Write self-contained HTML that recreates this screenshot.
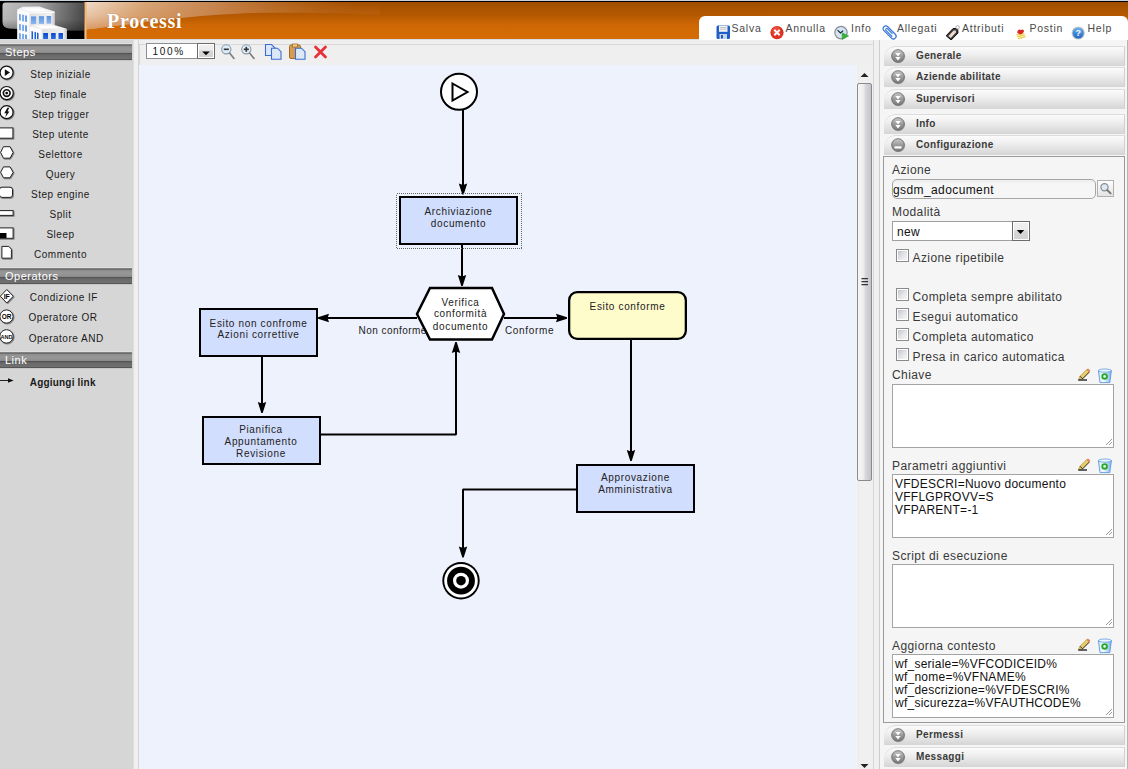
<!DOCTYPE html>
<html><head><meta charset="utf-8">
<style>
*{box-sizing:border-box}
html,body{margin:0;padding:0}
body{width:1128px;height:769px;overflow:hidden;position:relative;background:#f4f4f4;font-family:"Liberation Sans",sans-serif;color:#222}
.a{position:absolute}
.t{position:absolute;white-space:pre;line-height:1}
</style></head><body>
<div class="a" style="left:0;top:0;width:1128px;height:1px;background:#c9d1da"></div>
<div class="a" style="left:0;top:1px;width:1128px;height:1px;background:#000"></div>
<div class="a" style="left:0;top:39px;width:1128px;height:1px;background:#d6dde4"></div>
<svg class="a" style="left:0;top:2px" width="84" height="37" viewBox="0 2 84 37">
<defs>
<linearGradient id="lg1" x1="0" y1="0" x2="1" y2="0"><stop offset="0" stop-color="#c2c2c2"/><stop offset="0.45" stop-color="#a4a4a4"/><stop offset="0.8" stop-color="#6c6c6c"/><stop offset="1" stop-color="#4c4c4c"/></linearGradient><linearGradient id="lg2" x1="0" y1="0" x2="0" y2="1"><stop offset="0" stop-color="#000" stop-opacity="0"/><stop offset="0.6" stop-color="#000" stop-opacity="0.05"/><stop offset="1" stop-color="#000" stop-opacity="0.35"/></linearGradient>
<linearGradient id="win1" x1="0" y1="0" x2="0" y2="1"><stop offset="0" stop-color="#5c92e0"/><stop offset="1" stop-color="#8cb8f0"/></linearGradient>
<linearGradient id="win2" x1="0" y1="0" x2="0" y2="1"><stop offset="0" stop-color="#0848d0"/><stop offset="1" stop-color="#2a6ae0"/></linearGradient>
<linearGradient id="face" x1="0" y1="0" x2="1" y2="0"><stop offset="0" stop-color="#e0e0e0"/><stop offset="0.85" stop-color="#f0f0f0"/><stop offset="1" stop-color="#c8c8c8"/></linearGradient>
</defs>
<rect x="0" y="2" width="84" height="37" fill="#000"/>
<path d="M5.5,2.5 L84,2.5 L84,30.5 Q40,30.5 10,28.5 Q2.5,28 2.5,22 L2.5,5.5 Q2.5,2.5 5.5,2.5Z" fill="url(#lg1)"/><path d="M5.5,2.5 L84,2.5 L84,30.5 Q40,30.5 10,28.5 Q2.5,28 2.5,22 L2.5,5.5 Q2.5,2.5 5.5,2.5Z" fill="url(#lg2)"/>
<path d="M17.4,9.6 L22.5,6.8 L39,6.6 L54.5,11.5 L54.5,39 L17.4,39Z" fill="#f2f2f2"/>
<path d="M29.3,12.5 L54.5,11.8 L54.5,39 L29.3,39Z" fill="url(#face)"/><path d="M29.3,13 L54.5,12.3" stroke="#fff" stroke-width="1"/>
<path d="M22,8.5 L38,8.2 L48,11 L30,11.5Z" fill="#fff"/>
<path d="M17.4,9.6 L29.3,12.5 L29.3,39 L17.4,39Z" fill="#fbfbfb"/>
<g fill="#6a9ee6"><path d="M19.1,13.9 L20.8,14.3 L20.8,20.7 L19.1,20.3Z"/><path d="M22.2,14.6 L23.9,15 L23.9,21.4 L22.2,21Z"/><path d="M25,15.3 L27,15.7 L27,22.1 L25,21.7Z"/>
<path d="M19.1,23.8 L20.8,24.2 L20.8,30.4 L19.1,30Z"/><path d="M22.2,24.5 L23.9,24.9 L23.9,31.1 L22.2,30.7Z"/><path d="M25,25.2 L27,25.6 L27,31.8 L25,31.4Z"/>
<path d="M19.1,33 L20.8,33.4 L20.8,39 L19.1,39Z"/><path d="M22.2,33.7 L23.9,34.1 L23.9,39 L22.2,39Z"/><path d="M25,34.4 L27,34.8 L27,39 L25,39Z"/></g>
<rect x="31" y="16.4" width="5.1" height="7.7" fill="url(#win1)"/><rect x="38.9" y="16.2" width="5.1" height="7.7" fill="url(#win1)"/><rect x="46.6" y="16" width="4.5" height="7.7" fill="url(#win1)"/>
<path d="M29.9,27 L35,24.4 L52,24.2 L66.7,28.8 L66.7,39 L29.9,39Z" fill="#f0f0f0"/>
<path d="M41.5,29.3 L66.7,29 L66.7,39 L41.5,39Z" fill="url(#face)"/>
<path d="M35,25.8 L51,25.6 L60,28 L42,28.4Z" fill="#fff"/>
<path d="M29.9,27 L41.5,29.3 L41.5,39 L29.9,39Z" fill="#fcfcfc"/>
<g fill="#1a5cd8"><path d="M31.5,31 L33,31.4 L33,39 L31.5,39Z"/><path d="M34.5,31.8 L36,32.2 L36,39 L34.5,39Z"/><path d="M37,32.5 L38.5,32.9 L38.5,39 L37,39Z"/></g>
<rect x="43.2" y="33" width="4.8" height="6" fill="url(#win2)"/><rect x="51.1" y="33" width="4.6" height="6" fill="url(#win2)"/><rect x="58.5" y="33" width="4.5" height="6" fill="url(#win2)"/>
</svg>
<svg class="a" style="left:84px;top:2px" width="1044" height="37" viewBox="84 2 1044 37">
<defs>
<linearGradient id="og" x1="0" y1="0" x2="0" y2="1"><stop offset="0" stop-color="#a04e00"/><stop offset="0.35" stop-color="#b45800"/><stop offset="0.6" stop-color="#cc6604"/><stop offset="0.8" stop-color="#d36b05"/><stop offset="1" stop-color="#d46b05"/></linearGradient>
<linearGradient id="gl" gradientUnits="userSpaceOnUse" x1="86" y1="0" x2="365" y2="0"><stop offset="0" stop-color="#f0dcc8" stop-opacity="1"/><stop offset="0.2" stop-color="#dcac80" stop-opacity="0.95"/><stop offset="0.45" stop-color="#cc9060" stop-opacity="0.85"/><stop offset="0.75" stop-color="#c07838" stop-opacity="0.45"/><stop offset="1" stop-color="#b06020" stop-opacity="0"/></linearGradient>
<linearGradient id="gl2" gradientUnits="userSpaceOnUse" x1="0" y1="2" x2="0" y2="30"><stop offset="0" stop-color="#c87838" stop-opacity="0"/><stop offset="0.45" stop-color="#c87838" stop-opacity="0.2"/><stop offset="1" stop-color="#c86a20" stop-opacity="0.6"/></linearGradient>
</defs>
<rect x="84" y="2" width="1044" height="37" fill="url(#og)"/>
<path d="M86,2 L380,2 L380,14.5 C340,13.5 310,12.6 270,12.8 C200,13.5 150,22 86,29.5Z" fill="url(#gl)"/>
<path d="M86,2 L380,2 L380,14.5 C340,13.5 310,12.6 270,12.8 C200,13.5 150,22 86,29.5Z" fill="url(#gl2)"/>
<rect x="84" y="2" width="1" height="37" fill="#c86a10"/>
<rect x="85" y="2" width="1" height="37" fill="#c8c4c0"/>
<rect x="86" y="2" width="1" height="37" fill="#f0b070" opacity="0.6"/>
</svg>
<div class="t" style="left:107px;top:11.3px;font-family:'Liberation Serif',serif;font-weight:bold;font-size:20px;letter-spacing:0.7px;color:#fff;text-shadow:0 0 1px rgba(120,60,0,0.5)">Processi</div>
<div class="a" style="left:699px;top:16px;width:429px;height:24px;background:#fff;border-radius:6px 6px 0 0"></div>
<svg class="a" style="left:716px;top:25px" width="16" height="15" viewBox="0 0 16 15"><rect x="0.5" y="0.5" width="13.5" height="13.5" rx="1.5" fill="#1f5fc8"/><rect x="3" y="0.8" width="8.5" height="6" fill="#f4f4f4"/><path d="M4,2.5 H10.5 M4,4.2 H10.5" stroke="#b8b8b8" stroke-width="0.8"/><rect x="3.5" y="9" width="7.5" height="5" fill="#c8d4e8"/><rect x="5" y="10" width="2" height="3.5" fill="#1f5fc8"/></svg>
<div class="t" style="left:731.5px;top:23px;font-size:10.5px;letter-spacing:0.75px;color:#4a4a4a">Salva</div>
<svg class="a" style="left:770px;top:25px" width="16" height="15" viewBox="0 0 16 15"><circle cx="7" cy="7.6" r="6.6" fill="#e03020"/><circle cx="6.3" cy="6" r="4" fill="#f06050" opacity="0.6"/><path d="M4.3,4.9 L9.7,10.3 M9.7,4.9 L4.3,10.3" stroke="#fff" stroke-width="2"/></svg>
<div class="t" style="left:785.5px;top:23px;font-size:10.5px;letter-spacing:0.75px;color:#4a4a4a">Annulla</div>
<svg class="a" style="left:834px;top:25px" width="16" height="15" viewBox="0 0 16 15"><circle cx="7" cy="7.6" r="6.2" fill="#d2e6f6" stroke="#8c8c96" stroke-width="1.2"/><path d="M3.6,5.2 L6.4,8 L9.2,5.6" fill="none" stroke="#222" stroke-width="1.1"/><path d="M8.2,7.8 L14.6,11 L8.2,14.4Z" fill="#3cb43c" stroke="#2a9a2a" stroke-width="0.6"/></svg>
<div class="t" style="left:851px;top:23px;font-size:10.5px;letter-spacing:0.75px;color:#4a4a4a">Info</div>
<svg class="a" style="left:882px;top:25px" width="16" height="15" viewBox="0 0 16 15"><g transform="rotate(-45 7.5 7.5)"><rect x="4.9" y="-0.5" width="5.4" height="16" rx="2.7" fill="none" stroke="#3a78d8" stroke-width="1.3"/><path d="M6.5,12.5 V3.2 Q7.6,1.6 8.7,3.2 V10.5" fill="none" stroke="#3a78d8" stroke-width="1.1"/></g></svg>
<div class="t" style="left:897px;top:23px;font-size:10.5px;letter-spacing:0.75px;color:#4a4a4a">Allegati</div>
<svg class="a" style="left:945px;top:25px" width="16" height="15" viewBox="0 0 16 15"><path d="M1.2,10.8 L8,3.6 L12.6,3.4 L13,8 L6.2,15 Z" fill="#3a3a3a" stroke="#111" stroke-width="1" stroke-linejoin="round"/><path d="M3.4,10.9 L8.6,5.4 L10.8,5.4 L11,7.6 L5.8,13Z" fill="#f2dccc"/><circle cx="12.6" cy="2.4" r="1.7" fill="#fff" stroke="#999" stroke-width="0.8"/></svg>
<div class="t" style="left:962px;top:23px;font-size:10.5px;letter-spacing:0.75px;color:#4a4a4a">Attributi</div>
<svg class="a" style="left:1014px;top:25px" width="16" height="15" viewBox="0 0 16 15"><path d="M2,9 L9.5,7 L12,12.5 L4.5,14.5Z" fill="#fbf0a0"/><path d="M2.5,10 L10,8 M3.2,11.8 L10.8,9.8 M4,13.6 L11.5,11.6" stroke="#e0c040" stroke-width="0.8"/><path d="M3,7.5 Q4,3.5 7,5 Q10,3.5 10,6.5 Q8.5,9 6,9.5Z" fill="#d82828"/></svg>
<div class="t" style="left:1029.5px;top:23px;font-size:10.5px;letter-spacing:0.75px;color:#4a4a4a">Postin</div>
<svg class="a" style="left:1071px;top:25px" width="16" height="15" viewBox="0 0 16 15"><defs><linearGradient id="hg" x1="0" y1="0" x2="0" y2="1"><stop offset="0" stop-color="#6ab0f0"/><stop offset="1" stop-color="#1e64c0"/></linearGradient></defs><circle cx="7.2" cy="8" r="6.6" fill="#c8c8c8"/><circle cx="7.2" cy="8" r="5.6" fill="url(#hg)"/><text x="7.2" y="11.4" text-anchor="middle" font-family="Liberation Sans" font-weight="bold" font-size="9" fill="#fff">?</text></svg>
<div class="t" style="left:1087.5px;top:23px;font-size:10.5px;letter-spacing:0.75px;color:#4a4a4a">Help</div>
<div id="left" class="a" style="left:0;top:40px;width:133px;height:729px;background:#d6d6d6"></div>
<div class="a" style="left:133px;top:40px;width:5px;height:729px;background:linear-gradient(90deg,#d2d2d2 0,#ececec 1px,#f0f0f0 2px,#f0f0f0 100%)"></div>
<div class="a" style="left:138px;top:40px;width:1px;height:729px;background:#d4d4d4"></div>
<div class="a" style="left:0;top:43px;width:132px;height:18px;background:linear-gradient(180deg,#dfdfdf 0px,#dfdfdf 1px,#828282 1px,#828282 2px,#6e6e6e 2px,#6e6e6e 3px,#8e8e8e 3px,#8e8e8e 4px,#939393 4px,#939393 5px,#969696 5px,#969696 6px,#969696 6px,#969696 7px,#949494 7px,#949494 8px,#919191 8px,#919191 9px,#8c8c8c 9px,#8c8c8c 10px,#545454 10px,#545454 11px,#646464 11px,#646464 12px,#6a6a6a 12px,#6a6a6a 13px,#6c6c6c 13px,#6c6c6c 14px,#6e6e6e 14px,#6e6e6e 15px,#707070 15px,#707070 16px,#555555 16px,#555555 17px,#c6c6c6 17px,#c6c6c6 18px)"></div>
<div class="t" style="left:5px;top:47px;font-size:11px;letter-spacing:0.5px;color:#fff">Steps</div>
<div class="a" style="left:0;top:267px;width:132px;height:18px;background:linear-gradient(180deg,#dfdfdf 0px,#dfdfdf 1px,#828282 1px,#828282 2px,#6e6e6e 2px,#6e6e6e 3px,#8e8e8e 3px,#8e8e8e 4px,#939393 4px,#939393 5px,#969696 5px,#969696 6px,#969696 6px,#969696 7px,#949494 7px,#949494 8px,#919191 8px,#919191 9px,#8c8c8c 9px,#8c8c8c 10px,#545454 10px,#545454 11px,#646464 11px,#646464 12px,#6a6a6a 12px,#6a6a6a 13px,#6c6c6c 13px,#6c6c6c 14px,#6e6e6e 14px,#6e6e6e 15px,#707070 15px,#707070 16px,#555555 16px,#555555 17px,#c6c6c6 17px,#c6c6c6 18px)"></div>
<div class="t" style="left:5px;top:271px;font-size:11px;letter-spacing:0.5px;color:#fff">Operators</div>
<div class="a" style="left:0;top:351px;width:132px;height:18px;background:linear-gradient(180deg,#dfdfdf 0px,#dfdfdf 1px,#828282 1px,#828282 2px,#6e6e6e 2px,#6e6e6e 3px,#8e8e8e 3px,#8e8e8e 4px,#939393 4px,#939393 5px,#969696 5px,#969696 6px,#969696 6px,#969696 7px,#949494 7px,#949494 8px,#919191 8px,#919191 9px,#8c8c8c 9px,#8c8c8c 10px,#545454 10px,#545454 11px,#646464 11px,#646464 12px,#6a6a6a 12px,#6a6a6a 13px,#6c6c6c 13px,#6c6c6c 14px,#6e6e6e 14px,#6e6e6e 15px,#707070 15px,#707070 16px,#555555 16px,#555555 17px,#c6c6c6 17px,#c6c6c6 18px)"></div>
<div class="t" style="left:5px;top:355px;font-size:11px;letter-spacing:0.5px;color:#fff">Link</div>
<div class="t" style="left:0.5px;top:69.7px;width:120px;text-align:center;font-size:10px;letter-spacing:0.5px;color:#1a1a1a;">Step iniziale</div>
<div class="t" style="left:0.5px;top:89.7px;width:120px;text-align:center;font-size:10px;letter-spacing:0.5px;color:#1a1a1a;">Step finale</div>
<div class="t" style="left:0.5px;top:109.7px;width:120px;text-align:center;font-size:10px;letter-spacing:0.5px;color:#1a1a1a;">Step trigger</div>
<div class="t" style="left:0.5px;top:129.7px;width:120px;text-align:center;font-size:10px;letter-spacing:0.5px;color:#1a1a1a;">Step utente</div>
<div class="t" style="left:0.5px;top:149.7px;width:120px;text-align:center;font-size:10px;letter-spacing:0.5px;color:#1a1a1a;">Selettore</div>
<div class="t" style="left:0.5px;top:169.7px;width:120px;text-align:center;font-size:10px;letter-spacing:0.5px;color:#1a1a1a;">Query</div>
<div class="t" style="left:0.5px;top:189.7px;width:120px;text-align:center;font-size:10px;letter-spacing:0.5px;color:#1a1a1a;">Step engine</div>
<div class="t" style="left:0.5px;top:209.7px;width:120px;text-align:center;font-size:10px;letter-spacing:0.5px;color:#1a1a1a;">Split</div>
<div class="t" style="left:0.5px;top:229.7px;width:120px;text-align:center;font-size:10px;letter-spacing:0.5px;color:#1a1a1a;">Sleep</div>
<div class="t" style="left:0.5px;top:249.7px;width:120px;text-align:center;font-size:10px;letter-spacing:0.5px;color:#1a1a1a;">Commento</div>
<div class="t" style="left:3.8999999999999986px;top:293px;width:120px;text-align:center;font-size:10px;letter-spacing:0.5px;color:#1a1a1a;">Condizione IF</div>
<div class="t" style="left:3px;top:313.3px;width:120px;text-align:center;font-size:10px;letter-spacing:0.5px;color:#1a1a1a;">Operatore OR</div>
<div class="t" style="left:6.200000000000003px;top:333.8px;width:120px;text-align:center;font-size:10px;letter-spacing:0.5px;color:#1a1a1a;">Operatore AND</div>
<div class="t" style="left:2.700000000000003px;top:377.8px;width:120px;text-align:center;font-size:10px;letter-spacing:0.5px;color:#1a1a1a;font-weight:bold;letter-spacing:0.2px;">Aggiungi link</div>
<svg class="a" style="left:0;top:0" width="30" height="400"><defs><filter id="sh" x="-30%" y="-30%" width="160%" height="160%"><feDropShadow dx="0.8" dy="0.8" stdDeviation="0.6" flood-color="#000" flood-opacity="0.45"/></filter></defs><g filter="url(#sh)"><circle cx="6.6" cy="72.6" r="6.5" fill="#fff" stroke="#111" stroke-width="1.2"/></g><path d="M4.8,69.3 L10,72.6 L4.8,75.9Z" fill="#111"/><g filter="url(#sh)"><circle cx="6.7" cy="93.1" r="6.6" fill="#fff" stroke="#111" stroke-width="1.2"/></g><circle cx="6.7" cy="93.1" r="3.35" fill="none" stroke="#111" stroke-width="1.7"/><circle cx="6.7" cy="93.1" r="1.4" fill="#111"/><g filter="url(#sh)"><circle cx="6.6" cy="112.2" r="6.5" fill="#fff" stroke="#111" stroke-width="1.2"/></g><path d="M7.4,107.8 L9.2,107.8 L7.6,111.4 L9.4,111.4 L5.2,117.4 L6.4,113.2 L4.3,113.2Z" fill="#111"/><g filter="url(#sh)"><rect x="-0.5" y="127.9" width="13.4" height="10.3" fill="#fff" stroke="#222" stroke-width="1"/></g><g filter="url(#sh)"><path d="M3.5,146.7 L10,146.7 L13.2,152.4 L10,158.2 L3.5,158.2 L0.6,152.4Z" fill="#fff" stroke="#222" stroke-width="1"/></g><g filter="url(#sh)"><path d="M3.5,166.9 L10,166.9 L13.2,172.3 L10,177.8 L3.5,177.8 L0.6,172.3Z" fill="#fff" stroke="#222" stroke-width="1"/></g><g filter="url(#sh)"><rect x="-0.5" y="187.2" width="13" height="10.2" rx="2.5" fill="#fff" stroke="#222" stroke-width="1"/></g><g filter="url(#sh)"><rect x="-0.5" y="210.6" width="13.6" height="4.8" fill="#fff" stroke="#222" stroke-width="1"/></g><g filter="url(#sh)"><rect x="-0.5" y="227.9" width="13.6" height="10.4" fill="#fff" stroke="#222" stroke-width="1"/></g><rect x="0" y="233" width="6.5" height="5" fill="#000"/><g filter="url(#sh)"><path d="M1.9,246.4 L8.8,246.4 L11.4,249.2 L11.4,258.2 L1.9,258.2Z" fill="#fff" stroke="#222" stroke-width="1"/></g><g filter="url(#sh)"><path d="M6.8,289.5 L13.3,296.2 L6.8,303 L0.3,296.2Z" fill="#fff" stroke="#222" stroke-width="1"/></g><text x="6.8" y="298.8" text-anchor="middle" font-family="Liberation Sans" font-weight="bold" font-size="7" fill="#000">IF</text><g filter="url(#sh)"><circle cx="6.5" cy="316.5" r="6.6" fill="#fff" stroke="#222" stroke-width="1"/></g><text x="6.5" y="318.8" text-anchor="middle" font-family="Liberation Sans" font-weight="bold" font-size="6.5" fill="#000">OR</text><g filter="url(#sh)"><circle cx="6.5" cy="336.4" r="6.7" fill="#fff" stroke="#222" stroke-width="1"/></g><text x="6.6" y="338.6" text-anchor="middle" font-family="Liberation Sans" font-weight="bold" font-size="5.2" fill="#111" textLength="12" lengthAdjust="spacingAndGlyphs">AND</text><path d="M0,380.5 H9" stroke="#222" stroke-width="1"/><path d="M13.6,380.5 L8,378.3 L8,382.7Z" fill="#111"/></svg>
<div id="ctool" class="a" style="left:139px;top:40px;width:735px;height:25px;background:#efefef"></div>
<div class="a" style="left:139px;top:44px;width:735px;height:1px;background:#d8d8d8"></div>
<div class="a" style="left:139px;top:44px;width:1px;height:21px;background:#d8d8d8"></div>
<div id="canvas" class="a" style="left:139px;top:65px;width:717px;height:704px;background:#eef2fd"></div>
<svg class="a" style="left:0;top:0" width="1128" height="769" viewBox="0 0 1128 769"><path d="M463,110 V186" stroke="#000" fill="none" stroke-width="2" stroke-linejoin="bevel"/><path d="M462.30,194.50 L458.80,183.50 L463.00,184.90 L467.20,183.50 L463.70,194.50 Z" fill="#000"/>
<path d="M462,245 V278" stroke="#000" fill="none" stroke-width="2" stroke-linejoin="bevel"/><path d="M461.30,286.00 L457.80,275.00 L462.00,276.40 L466.20,275.00 L462.70,286.00 Z" fill="#000"/>
<path d="M417,318 H326" stroke="#000" fill="none" stroke-width="2" stroke-linejoin="bevel"/><path d="M318.00,317.30 L329.00,313.80 L327.60,318.00 L329.00,322.20 L318.00,318.70 Z" fill="#000"/>
<path d="M504,318 H559" stroke="#000" fill="none" stroke-width="2" stroke-linejoin="bevel"/><path d="M567.00,317.30 L556.00,313.80 L557.40,318.00 L556.00,322.20 L567.00,318.70 Z" fill="#000"/>
<path d="M262,357 V405" stroke="#000" fill="none" stroke-width="2" stroke-linejoin="bevel"/><path d="M261.30,413.00 L257.80,402.00 L262.00,403.40 L266.20,402.00 L262.70,413.00 Z" fill="#000"/>
<path d="M321,434.5 H456 V350" stroke="#000" fill="none" stroke-width="2" stroke-linejoin="bevel"/><path d="M455.30,342.00 L451.80,353.00 L456.00,351.60 L460.20,353.00 L456.70,342.00 Z" fill="#000"/>
<path d="M631,340 V453" stroke="#000" fill="none" stroke-width="2" stroke-linejoin="bevel"/><path d="M630.30,461.00 L626.80,450.00 L631.00,451.40 L635.20,450.00 L631.70,461.00 Z" fill="#000"/>
<path d="M576,489.5 H463 V549" stroke="#000" fill="none" stroke-width="2" stroke-linejoin="bevel"/><path d="M462.30,557.50 L458.80,546.50 L463.00,547.90 L467.20,546.50 L463.70,557.50 Z" fill="#000"/>
<text x="358.6" y="333.8" font-family="Liberation Sans" font-size="10" fill="#222" letter-spacing="0.45">Non conforme</text>
<text x="505" y="333.8" font-family="Liberation Sans" font-size="10" fill="#222" letter-spacing="0.65">Conforme</text>
<circle cx="459" cy="91.8" r="18" fill="#fff" stroke="#000" stroke-width="2"/>
<path d="M452.5,83.5 L467.5,92 L452.5,100.5 Z" fill="none" stroke="#000" stroke-width="2" stroke-linejoin="miter"/>
<rect x="396.5" y="193.5" width="125" height="55" fill="none" stroke="#666" stroke-width="1" stroke-dasharray="1,1" shape-rendering="crispEdges"/>
<rect x="400" y="197" width="117" height="47" fill="#d2defd" stroke="#000" stroke-width="2"/><text x="458.5" y="214.7" text-anchor="middle" font-family="Liberation Sans" font-size="10" fill="#222" letter-spacing="0.65">Archiviazione</text><text x="458.5" y="226.5" text-anchor="middle" font-family="Liberation Sans" font-size="10" fill="#222" letter-spacing="0.65">documento</text>
<path d="M430,288 L492,288 L504,314 L492,339.5 L430,339.5 L417,314 Z" fill="#fff" stroke="#000" stroke-width="2.5"/>
<text x="460.5" y="305.5" text-anchor="middle" font-family="Liberation Sans" font-size="10" fill="#222" letter-spacing="0.65">Verifica</text><text x="460.5" y="317.3" text-anchor="middle" font-family="Liberation Sans" font-size="10" fill="#222" letter-spacing="0.65">conformità</text><text x="460.5" y="329.5" text-anchor="middle" font-family="Liberation Sans" font-size="10" fill="#222" letter-spacing="0.65">documento</text>
<rect x="200" y="309" width="117" height="47" fill="#d2defd" stroke="#000" stroke-width="2"/><text x="258.5" y="326.6" text-anchor="middle" font-family="Liberation Sans" font-size="10" fill="#222" letter-spacing="0.65">Esito non confrome</text><text x="258.5" y="338.4" text-anchor="middle" font-family="Liberation Sans" font-size="10" fill="#222" letter-spacing="0.65">Azioni correttive</text>
<rect x="569.15" y="292.15" width="116.7" height="46.7" rx="8" fill="#fffccc" stroke="#000" stroke-width="2.3"/><text x="627.5" y="309.8" text-anchor="middle" font-family="Liberation Sans" font-size="10" fill="#222" letter-spacing="0.65">Esito conforme</text>
<rect x="203" y="417" width="117" height="47" fill="#d2defd" stroke="#000" stroke-width="2"/><text x="261" y="432.6" text-anchor="middle" font-family="Liberation Sans" font-size="10" fill="#222" letter-spacing="0.65">Pianifica</text><text x="261" y="444.7" text-anchor="middle" font-family="Liberation Sans" font-size="10" fill="#222" letter-spacing="0.65">Appuntamento</text><text x="261" y="456.8" text-anchor="middle" font-family="Liberation Sans" font-size="10" fill="#222" letter-spacing="0.65">Revisione</text>
<rect x="577" y="465" width="117" height="47" fill="#d2defd" stroke="#000" stroke-width="2"/><text x="635.5" y="481" text-anchor="middle" font-family="Liberation Sans" font-size="10" fill="#222" letter-spacing="0.65">Approvazione</text><text x="635.5" y="493" text-anchor="middle" font-family="Liberation Sans" font-size="10" fill="#222" letter-spacing="0.65">Amministrativa</text>
<circle cx="461" cy="580.7" r="18.7" fill="#000"/><circle cx="461" cy="580.7" r="16.8" fill="#fff"/><circle cx="461" cy="580.7" r="13.9" fill="#000"/><circle cx="461" cy="580.7" r="8" fill="#fff"/><circle cx="461" cy="580.7" r="4.8" fill="#000"/></svg>
<div class="a" style="left:146px;top:43px;width:69px;height:16px;border:1px solid #8e8e96;background:#fff"></div>
<div class="t" style="left:152.5px;top:46.5px;font-size:10px;letter-spacing:1.7px;color:#111">100%</div>
<div class="a" style="left:197px;top:43px;width:18px;height:16px;border:1px solid #6c6c6c;background:#fff"></div>
<div class="a" style="left:199px;top:45px;width:14px;height:12px;background:linear-gradient(180deg,#f0f0f0 0,#ececec 5px,#d6d6d6 6px,#d2d2d2 100%)"></div>
<svg class="a" style="left:199px;top:47px" width="14" height="10"><path d="M3.2,4.5 L10.8,4.5 L7,8.3Z" fill="#000"/></svg>
<svg class="a" style="left:221px;top:44px" width="16" height="17"><circle cx="5.3" cy="5.3" r="4.6" fill="#dcecf8" stroke="#8c9aa8" stroke-width="1.1"/><path d="M2.8,5.3 H7.8" stroke="#333" stroke-width="1.6"/><path d="M8.6,9 L13,14.5" stroke="#7a7a7a" stroke-width="1.6" stroke-linecap="round"/></svg>
<svg class="a" style="left:241px;top:44px" width="16" height="17"><circle cx="5.3" cy="5.3" r="4.6" fill="#dcecf8" stroke="#8c9aa8" stroke-width="1.1"/><path d="M2.8,5.3 H7.8" stroke="#333" stroke-width="1.6"/><path d="M5.3,2.8 V7.8" stroke="#333" stroke-width="1.6"/><path d="M8.6,9 L13,14.5" stroke="#7a7a7a" stroke-width="1.6" stroke-linecap="round"/></svg>
<svg class="a" style="left:264px;top:43px" width="20" height="18"><path d="M1.5,1.5 H7.5 L11.0,5.0 V12.5 H1.5Z" fill="#dce8f8" stroke="#3a6ed0" stroke-width="1.1"/><path d="M7.5,5.2 H13.5 L17.0,8.7 V16.2 H7.5Z" fill="#dce8f8" stroke="#3a6ed0" stroke-width="1.1"/></svg>
<svg class="a" style="left:288px;top:43px" width="20" height="18"><rect x="1.5" y="2" width="11" height="13.5" rx="1.5" fill="#d89a50" stroke="#a06a28" stroke-width="1"/><rect x="4.5" y="1" width="5" height="3" fill="#f0d090" stroke="#a06a28" stroke-width="0.8"/><path d="M7.5,5.2 H13.5 L17.0,8.7 V16.2 H7.5Z" fill="#dce8f8" stroke="#3a6ed0" stroke-width="1.1"/></svg>
<svg class="a" style="left:312px;top:43px" width="17" height="17"><path d="M3.5,4 L13.5,14 M13.5,4 L3.5,14" stroke="#e8303a" stroke-width="2.8" stroke-linecap="round"/></svg>
<div class="a" style="left:856px;top:65px;width:17px;height:704px;background:linear-gradient(90deg,#f6f6f6 0,#ececec 2px,#f0f0f0 4px,#f0f0f0 100%)"></div>
<svg class="a" style="left:856px;top:68px" width="17" height="12"><path d="M4.5,9 L12.5,9 L8.5,5Z" fill="#222"/></svg>
<div class="a" style="left:857px;top:83px;width:15px;height:398px;border:1px solid #8a8a8a;border-radius:2px;background:linear-gradient(90deg,#f6f6f6 0,#eeeeee 40%,#d6d6da 60%,#c4c4cc 100%)"></div>
<svg class="a" style="left:858px;top:276px" width="13" height="11"><path d="M3.5,2.7 H10 M3.5,5.7 H10 M3.5,8.7 H10" stroke="#333" stroke-width="1.2"/></svg>
<svg class="a" style="left:856px;top:761px" width="17" height="8"><path d="M4.5,3 L12.5,3 L8.5,7Z" fill="#222"/></svg>
<div id="right" class="a" style="left:874px;top:40px;width:254px;height:729px;background:#f0f0f0"></div>
<div class="a" style="left:873px;top:40px;width:1px;height:729px;background:#d6d6d6"></div>
<div class="a" style="left:879px;top:40px;width:1px;height:729px;background:#cdcdcd"></div>
<div class="a" style="left:880px;top:40px;width:248px;height:729px;background:#f5f5f5"></div>
<div class="a" style="left:1127px;top:40px;width:1px;height:729px;background:#b4b4b4"></div>
<div class="a" style="left:884px;top:46px;width:241px;height:20px;border-top:1px solid #dcdcdc;border-right:1px solid #d0d0d0;border-radius:12px 0 0 0;background:linear-gradient(180deg,#fbfbfb 0%,#f0f0f0 35%,#d5d5d5 100%)"></div>
<svg class="a" style="left:889.1px;top:46.6px" width="18" height="18" viewBox="-9 -9 18 18"><defs><linearGradient id="g46" x1="0" y1="0" x2="0" y2="1"><stop offset="0" stop-color="#cacaca"/><stop offset="0.55" stop-color="#969696"/><stop offset="1" stop-color="#7a7a7a"/></linearGradient></defs><circle cx="0.6" cy="0.6" r="6.6" fill="#000" opacity="0.18"/><circle cx="0" cy="0" r="6.3" fill="url(#g46)" stroke="#6a6a6a" stroke-width="0.9"/><path d="M-2.7,-2.9 L2.7,-2.9 L0,0.4Z M-2.7,1.1 L2.7,1.1 L0,4.5Z" fill="#fff"/></svg>
<div class="t" style="left:916px;top:51.4px;font-size:10px;font-weight:bold;letter-spacing:0.35px;color:#3a3a3a">Generale</div>
<div class="a" style="left:884px;top:67px;width:241px;height:20px;border-top:1px solid #dcdcdc;border-right:1px solid #d0d0d0;border-radius:12px 0 0 0;background:linear-gradient(180deg,#fbfbfb 0%,#f0f0f0 35%,#d5d5d5 100%)"></div>
<svg class="a" style="left:889.1px;top:67.6px" width="18" height="18" viewBox="-9 -9 18 18"><defs><linearGradient id="g67" x1="0" y1="0" x2="0" y2="1"><stop offset="0" stop-color="#cacaca"/><stop offset="0.55" stop-color="#969696"/><stop offset="1" stop-color="#7a7a7a"/></linearGradient></defs><circle cx="0.6" cy="0.6" r="6.6" fill="#000" opacity="0.18"/><circle cx="0" cy="0" r="6.3" fill="url(#g67)" stroke="#6a6a6a" stroke-width="0.9"/><path d="M-2.7,-2.9 L2.7,-2.9 L0,0.4Z M-2.7,1.1 L2.7,1.1 L0,4.5Z" fill="#fff"/></svg>
<div class="t" style="left:916px;top:72.4px;font-size:10px;font-weight:bold;letter-spacing:0.35px;color:#3a3a3a">Aziende abilitate</div>
<div class="a" style="left:884px;top:89px;width:241px;height:20px;border-top:1px solid #dcdcdc;border-right:1px solid #d0d0d0;border-radius:12px 0 0 0;background:linear-gradient(180deg,#fbfbfb 0%,#f0f0f0 35%,#d5d5d5 100%)"></div>
<svg class="a" style="left:889.1px;top:89.6px" width="18" height="18" viewBox="-9 -9 18 18"><defs><linearGradient id="g89" x1="0" y1="0" x2="0" y2="1"><stop offset="0" stop-color="#cacaca"/><stop offset="0.55" stop-color="#969696"/><stop offset="1" stop-color="#7a7a7a"/></linearGradient></defs><circle cx="0.6" cy="0.6" r="6.6" fill="#000" opacity="0.18"/><circle cx="0" cy="0" r="6.3" fill="url(#g89)" stroke="#6a6a6a" stroke-width="0.9"/><path d="M-2.7,-2.9 L2.7,-2.9 L0,0.4Z M-2.7,1.1 L2.7,1.1 L0,4.5Z" fill="#fff"/></svg>
<div class="t" style="left:916px;top:94.4px;font-size:10px;font-weight:bold;letter-spacing:0.35px;color:#3a3a3a">Supervisori</div>
<div class="a" style="left:884px;top:114px;width:241px;height:20px;border-top:1px solid #dcdcdc;border-right:1px solid #d0d0d0;border-radius:12px 0 0 0;background:linear-gradient(180deg,#fbfbfb 0%,#f0f0f0 35%,#d5d5d5 100%)"></div>
<svg class="a" style="left:889.1px;top:114.6px" width="18" height="18" viewBox="-9 -9 18 18"><defs><linearGradient id="g114" x1="0" y1="0" x2="0" y2="1"><stop offset="0" stop-color="#cacaca"/><stop offset="0.55" stop-color="#969696"/><stop offset="1" stop-color="#7a7a7a"/></linearGradient></defs><circle cx="0.6" cy="0.6" r="6.6" fill="#000" opacity="0.18"/><circle cx="0" cy="0" r="6.3" fill="url(#g114)" stroke="#6a6a6a" stroke-width="0.9"/><path d="M-2.7,-2.9 L2.7,-2.9 L0,0.4Z M-2.7,1.1 L2.7,1.1 L0,4.5Z" fill="#fff"/></svg>
<div class="t" style="left:916px;top:119.4px;font-size:10px;font-weight:bold;letter-spacing:0.35px;color:#3a3a3a">Info</div>
<div class="a" style="left:884px;top:135px;width:241px;height:20px;border-top:1px solid #dcdcdc;border-right:1px solid #d0d0d0;border-radius:12px 0 0 0;background:linear-gradient(180deg,#fbfbfb 0%,#f0f0f0 35%,#d5d5d5 100%)"></div>
<svg class="a" style="left:889.1px;top:135.6px" width="18" height="18" viewBox="-9 -9 18 18"><defs><linearGradient id="g135" x1="0" y1="0" x2="0" y2="1"><stop offset="0" stop-color="#cacaca"/><stop offset="0.55" stop-color="#969696"/><stop offset="1" stop-color="#7a7a7a"/></linearGradient></defs><circle cx="0.6" cy="0.6" r="6.6" fill="#000" opacity="0.18"/><circle cx="0" cy="0" r="6.3" fill="url(#g135)" stroke="#6a6a6a" stroke-width="0.9"/><rect x="-3.5" y="1.3" width="7" height="2.2" fill="#fff"/></svg>
<div class="t" style="left:916px;top:140.4px;font-size:10px;font-weight:bold;letter-spacing:0.35px;color:#3a3a3a">Configurazione</div>
<div class="a" style="left:884px;top:725px;width:241px;height:20px;border-top:1px solid #dcdcdc;border-right:1px solid #d0d0d0;border-radius:12px 0 0 0;background:linear-gradient(180deg,#fbfbfb 0%,#f0f0f0 35%,#d5d5d5 100%)"></div>
<svg class="a" style="left:889.1px;top:725.6px" width="18" height="18" viewBox="-9 -9 18 18"><defs><linearGradient id="g725" x1="0" y1="0" x2="0" y2="1"><stop offset="0" stop-color="#cacaca"/><stop offset="0.55" stop-color="#969696"/><stop offset="1" stop-color="#7a7a7a"/></linearGradient></defs><circle cx="0.6" cy="0.6" r="6.6" fill="#000" opacity="0.18"/><circle cx="0" cy="0" r="6.3" fill="url(#g725)" stroke="#6a6a6a" stroke-width="0.9"/><path d="M-2.7,-2.9 L2.7,-2.9 L0,0.4Z M-2.7,1.1 L2.7,1.1 L0,4.5Z" fill="#fff"/></svg>
<div class="t" style="left:916px;top:730.4px;font-size:10px;font-weight:bold;letter-spacing:0.35px;color:#3a3a3a">Permessi</div>
<div class="a" style="left:884px;top:747px;width:241px;height:20px;border-top:1px solid #dcdcdc;border-right:1px solid #d0d0d0;border-radius:12px 0 0 0;background:linear-gradient(180deg,#fbfbfb 0%,#f0f0f0 35%,#d5d5d5 100%)"></div>
<svg class="a" style="left:889.1px;top:747.6px" width="18" height="18" viewBox="-9 -9 18 18"><defs><linearGradient id="g747" x1="0" y1="0" x2="0" y2="1"><stop offset="0" stop-color="#cacaca"/><stop offset="0.55" stop-color="#969696"/><stop offset="1" stop-color="#7a7a7a"/></linearGradient></defs><circle cx="0.6" cy="0.6" r="6.6" fill="#000" opacity="0.18"/><circle cx="0" cy="0" r="6.3" fill="url(#g747)" stroke="#6a6a6a" stroke-width="0.9"/><path d="M-2.7,-2.9 L2.7,-2.9 L0,0.4Z M-2.7,1.1 L2.7,1.1 L0,4.5Z" fill="#fff"/></svg>
<div class="t" style="left:916px;top:752.4px;font-size:10px;font-weight:bold;letter-spacing:0.35px;color:#3a3a3a">Messaggi</div>
<div class="a" style="left:883px;top:156px;width:242px;height:567px;border:1px solid #9a9a9a;background:#f5f5f5"></div>
<div class="t" style="left:892px;top:163.7px;font-size:12px;letter-spacing:0.42px;color:#383838">Azione</div>
<div class="a" style="left:892px;top:179px;width:204px;height:20px;border:1px solid #a6a6a6;border-radius:5px;background:linear-gradient(180deg,#ececec 0,#f6f6f6 4px,#f6f6f6 100%)"></div>
<div class="t" style="left:893px;top:183.5px;font-size:12px;letter-spacing:0.4px;color:#111">gsdm_adocument</div>
<div class="a" style="left:1097px;top:180px;width:17px;height:17px;border:1px solid #b0b0b0;background:linear-gradient(180deg,#fdfdfd,#e4e4e4)"></div>
<svg class="a" style="left:1098px;top:181px" width="15" height="15"><circle cx="6.5" cy="6.3" r="3.6" fill="#dbe9f7" stroke="#8a8a8a" stroke-width="1.2"/><path d="M9.2,9 L12.6,12.4" stroke="#777" stroke-width="2" stroke-linecap="round"/></svg>
<div class="t" style="left:892px;top:206px;font-size:12px;letter-spacing:0.42px;color:#383838">Modalità</div>
<div class="a" style="left:892px;top:221px;width:138px;height:20px;border:1px solid #a0a0a0;background:#fff"></div>
<div class="t" style="left:897px;top:225.5px;font-size:12px;letter-spacing:0.3px;color:#111">new</div>
<div class="a" style="left:1012px;top:221px;width:18px;height:20px;border:1px solid #6c6c6c;background:#fff"></div>
<div class="a" style="left:1014px;top:223px;width:14px;height:16px;background:linear-gradient(180deg,#f0f0f0 0,#ececec 7px,#d6d6d6 8px,#d2d2d2 100%)"></div>
<svg class="a" style="left:1014px;top:226px" width="14" height="10"><path d="M2.8,4 L10.2,4 L6.5,8Z" fill="#000"/></svg>
<div class="a" style="left:896px;top:249px;width:13px;height:13px;border:1px solid #8a8a8a;background:#fff"></div>
<div class="a" style="left:898px;top:251px;width:9px;height:9px;background:linear-gradient(135deg,#c2c6ce,#e4e6ea 55%,#f6f6f6)"></div>
<div class="t" style="left:912.5px;top:252px;font-size:12px;letter-spacing:0.42px;color:#383838">Azione ripetibile</div>
<div class="a" style="left:896px;top:288px;width:13px;height:13px;border:1px solid #8a8a8a;background:#fff"></div>
<div class="a" style="left:898px;top:290px;width:9px;height:9px;background:linear-gradient(135deg,#c2c6ce,#e4e6ea 55%,#f6f6f6)"></div>
<div class="t" style="left:912.5px;top:291px;font-size:12px;letter-spacing:0.42px;color:#383838">Completa sempre abilitato</div>
<div class="a" style="left:896px;top:308px;width:13px;height:13px;border:1px solid #8a8a8a;background:#fff"></div>
<div class="a" style="left:898px;top:310px;width:9px;height:9px;background:linear-gradient(135deg,#c2c6ce,#e4e6ea 55%,#f6f6f6)"></div>
<div class="t" style="left:912.5px;top:311px;font-size:12px;letter-spacing:0.42px;color:#383838">Esegui automatico</div>
<div class="a" style="left:896px;top:328px;width:13px;height:13px;border:1px solid #8a8a8a;background:#fff"></div>
<div class="a" style="left:898px;top:330px;width:9px;height:9px;background:linear-gradient(135deg,#c2c6ce,#e4e6ea 55%,#f6f6f6)"></div>
<div class="t" style="left:912.5px;top:331px;font-size:12px;letter-spacing:0.42px;color:#383838">Completa automatico</div>
<div class="a" style="left:896px;top:348px;width:13px;height:13px;border:1px solid #8a8a8a;background:#fff"></div>
<div class="a" style="left:898px;top:350px;width:9px;height:9px;background:linear-gradient(135deg,#c2c6ce,#e4e6ea 55%,#f6f6f6)"></div>
<div class="t" style="left:912.5px;top:351px;font-size:12px;letter-spacing:0.42px;color:#383838">Presa in carico automatica</div>
<div class="t" style="left:892px;top:369px;font-size:12px;letter-spacing:0.42px;color:#383838">Chiave</div>
<svg class="a" style="left:1077px;top:368px" width="15" height="14"><path d="M1.6,11.4 L3,8.2 L9.6,1.6 L12.2,4.2 L5.6,10.8Z" fill="#e6cc6a" stroke="#b09030" stroke-width="0.6"/><path d="M3,8.2 L5.6,10.8 L12.2,4.2" fill="none" stroke="#222" stroke-width="0.9"/><path d="M9.6,1.6 L11,0.4 L13.4,2.8 L12.2,4.2Z" fill="#e07a5a"/><path d="M1.2,12 L10,12" stroke="#111" stroke-width="1.3"/></svg>
<svg class="a" style="left:1097px;top:368px" width="16" height="16"><defs><linearGradient id="tb369" x1="0" y1="0" x2="1" y2="0"><stop offset="0" stop-color="#d8e8f8"/><stop offset="0.4" stop-color="#f6faff"/><stop offset="1" stop-color="#7ab0e8"/></linearGradient></defs><path d="M1.4,2.6 L14.4,2.6 L12.8,14.6 L3,14.6Z" fill="url(#tb369)" stroke="#5a9ae0" stroke-width="0.9"/><ellipse cx="7.9" cy="2.6" rx="6.5" ry="1.6" fill="#eef6fe" stroke="#5a9ae0" stroke-width="0.8"/><circle cx="7.6" cy="8.4" r="2.3" fill="none" stroke="#22aa22" stroke-width="1.9"/><path d="M6.8,8.8 L8,7.2 L9,8.8Z" fill="#fff"/></svg>
<div class="a" style="left:892px;top:384px;width:222px;height:64px;border:1px solid #a4a4a4;background:#fff"></div>
<svg class="a" style="left:1104px;top:437px" width="9" height="9"><path d="M8,2 L2,8 M8,5 L5,8" stroke="#9a9a9a" stroke-width="1"/></svg>
<div class="t" style="left:892px;top:459.6px;font-size:12px;letter-spacing:0.42px;color:#383838">Parametri aggiuntivi</div>
<svg class="a" style="left:1077px;top:458px" width="15" height="14"><path d="M1.6,11.4 L3,8.2 L9.6,1.6 L12.2,4.2 L5.6,10.8Z" fill="#e6cc6a" stroke="#b09030" stroke-width="0.6"/><path d="M3,8.2 L5.6,10.8 L12.2,4.2" fill="none" stroke="#222" stroke-width="0.9"/><path d="M9.6,1.6 L11,0.4 L13.4,2.8 L12.2,4.2Z" fill="#e07a5a"/><path d="M1.2,12 L10,12" stroke="#111" stroke-width="1.3"/></svg>
<svg class="a" style="left:1097px;top:458px" width="16" height="16"><defs><linearGradient id="tb459" x1="0" y1="0" x2="1" y2="0"><stop offset="0" stop-color="#d8e8f8"/><stop offset="0.4" stop-color="#f6faff"/><stop offset="1" stop-color="#7ab0e8"/></linearGradient></defs><path d="M1.4,2.6 L14.4,2.6 L12.8,14.6 L3,14.6Z" fill="url(#tb459)" stroke="#5a9ae0" stroke-width="0.9"/><ellipse cx="7.9" cy="2.6" rx="6.5" ry="1.6" fill="#eef6fe" stroke="#5a9ae0" stroke-width="0.8"/><circle cx="7.6" cy="8.4" r="2.3" fill="none" stroke="#22aa22" stroke-width="1.9"/><path d="M6.8,8.8 L8,7.2 L9,8.8Z" fill="#fff"/></svg>
<div class="a" style="left:892px;top:474px;width:222px;height:64px;border:1px solid #a4a4a4;background:#fff"></div>
<svg class="a" style="left:1104px;top:527px" width="9" height="9"><path d="M8,2 L2,8 M8,5 L5,8" stroke="#9a9a9a" stroke-width="1"/></svg>
<div class="t" style="left:895px;top:478px;font-size:12px;letter-spacing:0.25px;color:#111">VFDESCRI=Nuovo documento</div>
<div class="t" style="left:895px;top:491px;font-size:12px;letter-spacing:0.25px;color:#111">VFFLGPROVV=S</div>
<div class="t" style="left:895px;top:504px;font-size:12px;letter-spacing:0.25px;color:#111">VFPARENT=-1</div>
<div class="t" style="left:892px;top:549.6px;font-size:12px;letter-spacing:0.42px;color:#383838">Script di esecuzione</div>
<div class="a" style="left:892px;top:564px;width:222px;height:64px;border:1px solid #a4a4a4;background:#fff"></div>
<svg class="a" style="left:1104px;top:617px" width="9" height="9"><path d="M8,2 L2,8 M8,5 L5,8" stroke="#9a9a9a" stroke-width="1"/></svg>
<div class="t" style="left:892px;top:639.6px;font-size:12px;letter-spacing:0.42px;color:#383838">Aggiorna contesto</div>
<svg class="a" style="left:1077px;top:638px" width="15" height="14"><path d="M1.6,11.4 L3,8.2 L9.6,1.6 L12.2,4.2 L5.6,10.8Z" fill="#e6cc6a" stroke="#b09030" stroke-width="0.6"/><path d="M3,8.2 L5.6,10.8 L12.2,4.2" fill="none" stroke="#222" stroke-width="0.9"/><path d="M9.6,1.6 L11,0.4 L13.4,2.8 L12.2,4.2Z" fill="#e07a5a"/><path d="M1.2,12 L10,12" stroke="#111" stroke-width="1.3"/></svg>
<svg class="a" style="left:1097px;top:638px" width="16" height="16"><defs><linearGradient id="tb639" x1="0" y1="0" x2="1" y2="0"><stop offset="0" stop-color="#d8e8f8"/><stop offset="0.4" stop-color="#f6faff"/><stop offset="1" stop-color="#7ab0e8"/></linearGradient></defs><path d="M1.4,2.6 L14.4,2.6 L12.8,14.6 L3,14.6Z" fill="url(#tb639)" stroke="#5a9ae0" stroke-width="0.9"/><ellipse cx="7.9" cy="2.6" rx="6.5" ry="1.6" fill="#eef6fe" stroke="#5a9ae0" stroke-width="0.8"/><circle cx="7.6" cy="8.4" r="2.3" fill="none" stroke="#22aa22" stroke-width="1.9"/><path d="M6.8,8.8 L8,7.2 L9,8.8Z" fill="#fff"/></svg>
<div class="a" style="left:892px;top:654px;width:222px;height:64px;border:1px solid #a4a4a4;background:#fff"></div>
<svg class="a" style="left:1104px;top:707px" width="9" height="9"><path d="M8,2 L2,8 M8,5 L5,8" stroke="#9a9a9a" stroke-width="1"/></svg>
<div class="t" style="left:895px;top:658px;font-size:12px;letter-spacing:0.25px;color:#111">wf_seriale=%VFCODICEID%</div>
<div class="t" style="left:895px;top:671px;font-size:12px;letter-spacing:0.25px;color:#111">wf_nome=%VFNAME%</div>
<div class="t" style="left:895px;top:684px;font-size:12px;letter-spacing:0.25px;color:#111">wf_descrizione=%VFDESCRI%</div>
<div class="t" style="left:895px;top:697px;font-size:12px;letter-spacing:0.25px;color:#111">wf_sicurezza=%VFAUTHCODE%</div>
</body></html>
